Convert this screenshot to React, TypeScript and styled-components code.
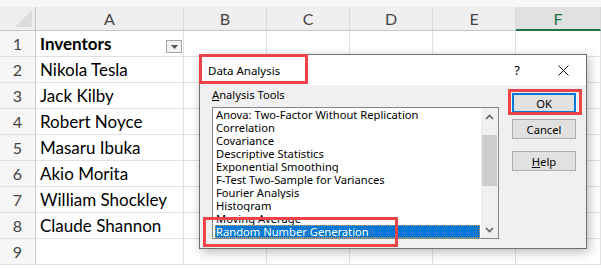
import * as React from "react";
import styled, { createGlobalStyle } from "styled-components";

const GlobalStyle = createGlobalStyle`
  html, body {
    margin: 0;
    padding: 0;
    background: #fff;
    overflow: hidden;
  }
  * {
    box-sizing: border-box;
  }
`;

const columns = [
  { key: "A", width: 148 },
  { key: "B", width: 83 },
  { key: "C", width: 83 },
  { key: "D", width: 83 },
  { key: "E", width: 83 },
  { key: "F", width: 85 },
];

const rows = [
  { text: "Inventors", bold: true },
  { text: "Nikola Tesla" },
  { text: "Jack Kilby" },
  { text: "Robert Noyce" },
  { text: "Masaru Ibuka" },
  { text: "Akio Morita" },
  { text: "William Shockley" },
  { text: "Claude Shannon" },
  { text: "" },
];

const tools = [
  "Anova: Two-Factor Without Replication",
  "Correlation",
  "Covariance",
  "Descriptive Statistics",
  "Exponential Smoothing",
  "F-Test Two-Sample for Variances",
  "Fourier Analysis",
  "Histogram",
  "Moving Average",
  "Random Number Generation",
];

const Page = styled.div`
  position: relative;
  width: 601px;
  height: 268px;
  overflow: hidden;
  font-family: Lato, "Liberation Sans", sans-serif;
`;

const TopStrip = styled.div`
  height: 7px;
  background: #f7f7f7;
`;

const HeaderRow = styled.div`
  display: flex;
  height: 24px;
  background: #efefef;
  border-bottom: 1px solid #c6c6c6;
`;

const Corner = styled.div`
  width: 36px;
  border-right: 1px solid #c6c6c6;
  display: flex;
  align-items: flex-end;
  justify-content: flex-end;
  padding: 0 3px 3px 0;
`;

const ColHeader = styled.div<{ $w: number; $active?: boolean }>`
  width: ${(p) => p.$w}px;
  flex-shrink: 0;
  display: flex;
  align-items: center;
  justify-content: center;
  font-size: 16px;
  color: ${(p) => (p.$active ? "#217346" : "#444")};
  background: ${(p) => (p.$active ? "#e1e1e1" : "transparent")};
  border-right: 1px solid #d8d8d8;
  border-bottom: ${(p) => (p.$active ? "2px solid #217346" : "none")};
  margin-bottom: ${(p) => (p.$active ? "-1px" : "0")};
`;

const Row = styled.div`
  display: flex;
  height: 26px;
`;

const RowHeader = styled.div`
  width: 36px;
  flex-shrink: 0;
  display: flex;
  align-items: center;
  justify-content: center;
  font-size: 16px;
  color: #444;
  background: #f6f6f6;
  border-right: 1px solid #c6c6c6;
  border-bottom: 1px solid #e1e1e1;
`;

const Cell = styled.div<{ $w: number; $bold?: boolean }>`
  position: relative;
  width: ${(p) => p.$w}px;
  flex-shrink: 0;
  display: flex;
  align-items: center;
  padding-left: 4px;
  font-size: 17px;
  font-weight: ${(p) => (p.$bold ? 700 : 400)};
  color: #000;
  border-right: 1px solid #e1e1e1;
  border-bottom: 1px solid #e1e1e1;
  white-space: nowrap;
`;

const FilterButton = styled.div`
  position: absolute;
  right: 1px;
  top: 9px;
  width: 16px;
  height: 13px;
  border: 1px solid #a6a6a6;
  background: #f3f3f3;
  display: flex;
  align-items: center;
  justify-content: center;
`;

const Dialog = styled.div`
  position: absolute;
  left: 199px;
  top: 54px;
  width: 388px;
  height: 195px;
  background: #f0f0f0;
  border: 1px solid #6f6f6f;
  box-shadow: 2px 3px 10px rgba(0, 0, 0, 0.28);
  font-family: "Noto Sans", "Open Sans", sans-serif;
  font-size: 11.2px;
  color: #000;
  display: flex;
  flex-direction: column;
`;

const TitleBar = styled.div`
  height: 30px;
  background: #fff;
  display: flex;
  align-items: center;
  padding-left: 8px;
  font-size: 11.5px;
`;

const Title = styled.div`
  flex: 1;
`;

const TitleIcon = styled.div`
  width: 46px;
  display: flex;
  justify-content: center;
  align-items: center;
  font-size: 13px;
`;

const Body = styled.div`
  flex: 1;
  display: flex;
  gap: 13px;
  padding: 3px 10px 0 12px;
`;

const ToolsColumn = styled.div`
  display: flex;
  flex-direction: column;
`;

const Label = styled.div`
  height: 14px;
  line-height: 14px;
  margin-bottom: 5px;
`;

const ListBox = styled.div`
  width: 287px;
  height: 132px;
  border: 1px solid #828790;
  background: #fff;
  display: flex;
  overflow: hidden;
`;

const Items = styled.div`
  flex: 1;
  padding: 0 1px 0 2px;
`;

const Item = styled.div<{ $selected?: boolean }>`
  height: 13px;
  line-height: 13px;
  padding-left: 1px;
  white-space: nowrap;
  overflow: hidden;
  color: ${(p) => (p.$selected ? "#fff" : "#000")};
  background: ${(p) => (p.$selected ? "#0078d7" : "transparent")};
  outline: ${(p) => (p.$selected ? "1px dotted #f0a040" : "none")};
  outline-offset: -1px;
`;

const ScrollBar = styled.div`
  width: 17px;
  background: #f0f0f0;
  display: flex;
  flex-direction: column;
`;

const ScrollArrow = styled.div`
  height: 17px;
  display: flex;
  align-items: center;
  justify-content: center;
`;

const Track = styled.div`
  flex: 1;
  padding: 10px 1px 0;
`;

const Thumb = styled.div`
  height: 51px;
  background: #cdcdcd;
`;

const Buttons = styled.div`
  display: flex;
  flex-direction: column;
  padding-top: 5px;
`;

const Button = styled.div<{ $default?: boolean; $gap?: number }>`
  width: 64px;
  height: 20px;
  margin-top: ${(p) => p.$gap ?? 0}px;
  background: #e1e1e1;
  border: ${(p) => (p.$default ? "2px solid #0078d7" : "1px solid #adadad")};
  display: flex;
  align-items: center;
  justify-content: center;
`;

const Mnemonic = styled.span`
  text-decoration: underline;
`;

const Highlight = styled.div<{ $x: number; $y: number; $w: number; $h: number }>`
  position: absolute;
  left: ${(p) => p.$x}px;
  top: ${(p) => p.$y}px;
  width: ${(p) => p.$w}px;
  height: ${(p) => p.$h}px;
  border: 3px solid #ee4449;
  pointer-events: none;
`;

const Chevron = ({ up }: { up?: boolean }) => (
  <svg width="9" height="6" viewBox="0 0 9 6">
    <path
      d={up ? "M1 5 L4.5 1.5 L8 5" : "M1 1 L4.5 4.5 L8 1"}
      fill="none"
      stroke="#606060"
      strokeWidth="1.6"
    />
  </svg>
);

export default function App() {
  return (
    <Page>
      <GlobalStyle />
      <TopStrip />
      <HeaderRow>
        <Corner>
          <svg width="17" height="17" viewBox="0 0 17 17">
            <polygon points="17,0 17,17 0,17" fill="#dcdcdc" />
          </svg>
        </Corner>
        {columns.map((c) => (
          <ColHeader key={c.key} $w={c.width} $active={c.key === "F"}>
            {c.key}
          </ColHeader>
        ))}
      </HeaderRow>
      {rows.map((r, i) => (
        <Row key={i}>
          <RowHeader>{i + 1}</RowHeader>
          {columns.map((c, j) => (
            <Cell key={c.key} $w={c.width} $bold={r.bold && j === 0}>
              {j === 0 ? r.text : ""}
              {j === 0 && i === 0 && (
                <FilterButton>
                  <svg width="7" height="4" viewBox="0 0 7 4">
                    <polygon points="0,0 7,0 3.5,4" fill="#555" />
                  </svg>
                </FilterButton>
              )}
            </Cell>
          ))}
        </Row>
      ))}

      <Dialog>
        <TitleBar>
          <Title>Data Analysis</Title>
          <TitleIcon>?</TitleIcon>
          <TitleIcon>
            <svg width="11" height="11" viewBox="0 0 11 11">
              <path d="M0.5 0.5 L10.5 10.5 M10.5 0.5 L0.5 10.5" stroke="#111" strokeWidth="1" />
            </svg>
          </TitleIcon>
        </TitleBar>
        <Body>
          <ToolsColumn>
            <Label>
              <Mnemonic>A</Mnemonic>nalysis Tools
            </Label>
            <ListBox>
              <Items>
                {tools.map((t, i) => (
                  <Item key={t} $selected={i === tools.length - 1}>
                    {t}
                  </Item>
                ))}
              </Items>
              <ScrollBar>
                <ScrollArrow>
                  <Chevron up />
                </ScrollArrow>
                <Track>
                  <Thumb />
                </Track>
                <ScrollArrow>
                  <Chevron />
                </ScrollArrow>
              </ScrollBar>
            </ListBox>
          </ToolsColumn>
          <Buttons>
            <Button $default>OK</Button>
            <Button $gap={6}>Cancel</Button>
            <Button $gap={12}>
              <Mnemonic>H</Mnemonic>elp
            </Button>
          </Buttons>
        </Body>
      </Dialog>

      <Highlight $x={199} $y={54} $w={109} $h={30} />
      <Highlight $x={508} $y={89} $w={74} $h={26} />
      <Highlight $x={203} $y={217} $w={195} $h={30} />
    </Page>
  );
}
